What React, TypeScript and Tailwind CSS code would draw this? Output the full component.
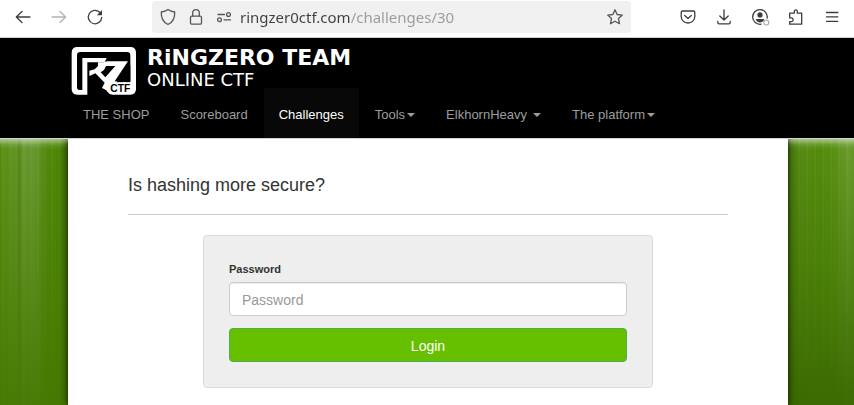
import type { ReactNode } from "react";

function ToolButton({ label, children }: { label: string; children: ReactNode }) {
  return (
    <button type="button" aria-label={label} className="flex h-8 w-9 shrink-0 items-center justify-center text-[#3c3c3e]">
      {children}
    </button>
  );
}

function Icon({ children, className = "" }: { children: ReactNode; className?: string }) {
  return (
    <svg
      viewBox="0 0 16 16"
      className={`size-4 shrink-0 overflow-visible ${className}`}
      fill="none"
      stroke="currentColor"
      strokeWidth="1.3"
      strokeLinecap="round"
      strokeLinejoin="round"
      aria-hidden="true"
    >
      {children}
    </svg>
  );
}

function BrowserBar() {
  return (
    <div className="flex h-[38px] items-start border-b border-[#cfcfcf] bg-white pt-px pr-1 pl-[5px]">
      <ToolButton label="Back">
        <Icon><path d="M15 8H1.5M7 2.5 1.3 8 7 13.5" /></Icon>
      </ToolButton>
      <ToolButton label="Forward">
        <Icon className="text-[#b3b3b4]"><path d="M1 8h13.5M9 2.500 14.700 8 9 13.500" /></Icon>
      </ToolButton>
      <ToolButton label="Reload">
        <Icon>
          <path d="M12.600 3.200A6.700 6.700 0 1 0 14.700 8.500" />
          <path d="M15 1v5.200H9.800z" fill="currentColor" stroke="none" />
        </Icon>
      </ToolButton>
      <div className="mx-[39px] flex h-8 min-w-0 flex-1 items-center gap-3 rounded bg-[#f0f0f1] px-2 text-[#56565a]">
        <Icon><path d="M8 .6C6 2.200 3.800 2.800 1.300 3c-.3 5.800 2 10.400 6.700 12.500C12.700 13.400 15 8.800 14.700 3 12.200 2.800 10 2.200 8 .6z" /></Icon>
        <Icon>
          <rect x="2.500" y="7.200" width="11" height="8" rx="1.300" />
          <path d="M4.700 7V4a3.300 3.300 0 0 1 6.600 0v3" />
        </Icon>
        <Icon>
          <path d="M2 5.500h6.500M8 10.800h6.500" />
          <circle cx="12.500" cy="5.500" r="1.900" />
          <circle cx="3.500" cy="10.800" r="1.900" />
        </Icon>
        <input
          aria-label="Address"
          type="text"
          defaultValue="ringzer0ctf.com/challenges/30"
          className="-ml-1 h-8 min-w-0 flex-1 bg-[linear-gradient(90deg,#3f3f42_110px,#9a9a9c_110px)] bg-clip-text font-['Noto_Sans',sans-serif] text-[15px] text-transparent outline-none"
        />
        <button type="button" aria-label="Bookmark">
          <Icon><path d="m8 .8 2.100 4.700 5.200.6-3.800 3.500 1 5.100L8 12.200l-4.500 2.500 1-5.100L.7 6.100l5.200-.6z" /></Icon>
        </button>
      </div>
      <ToolButton label="Pocket">
        <Icon>
          <path d="M2.500 2h11c.8 0 1.300.5 1.300 1.300V7.500a6.800 6.500 0 0 1-13.600 0V3.300C1.200 2.500 1.700 2 2.500 2z" />
          <path d="M4.700 6.500 8 9.500l3.300-3" />
        </Icon>
      </ToolButton>
      <ToolButton label="Downloads">
        <Icon><path d="M8 .8v10M3.800 7 8 11l4.200-4M1.800 12.500v1c0 .8.500 1.300 1.300 1.300h9.800c.8 0 1.300-.5 1.300-1.300v-1" /></Icon>
      </ToolButton>
      <ToolButton label="Account">
        <Icon>
          <path d="M15.200 9A7.300 7.300 0 1 0 9 15.200" />
          <circle cx="8" cy="5.900" r="2.600" fill="currentColor" stroke="none" />
          <path d="M3.800 10h8.400c-.3 2.300-2.200 3.500-4.200 3.500S4.100 12.300 3.800 10z" fill="currentColor" stroke="none" />
          <circle cx="14.300" cy="13.500" r="2.500" fill="white" stroke="#a5a5a6" strokeWidth="1.100" />
        </Icon>
      </ToolButton>
      <ToolButton label="Extensions">
        <Icon><path d="M1.700 8V4.200h4.600V2.400a1.500 1.500 0 0 1 3 0v1.800h4.400v11H1.700v-2.500h1.500a1.600 1.600 0 0 0 0-3.800H1.700z" /></Icon>
      </ToolButton>
      <ToolButton label="Menu">
        <Icon><path d="M2.500 3.500h11.300M2.500 7.900h11.300M2.500 12.300h11.300" /></Icon>
      </ToolButton>
    </div>
  );
}

function Brand() {
  return (
    <a href="#home" className="flex h-[50px] items-start gap-[11px] pl-[3px] text-white">
      <svg viewBox="9 12 195 147" className="mt-2 h-[49px] w-[65px] shrink-0" aria-hidden="true">
        <path
          fill="white"
          d="M28 15H187Q204 15 204 32V141Q204 158 187 158H134Q124 158 118 149L108 136 118 118H187V40Q187 30 177 30H37Q27 30 27 40V136Q27 144 35 144H43V48H116L110 61H58V158H28Q11 158 11 141V32Q11 15 28 15Z"
        />
        <path fill="white" d="M64 86 80 82 90 72V61H106L118 58H180L132 130 114 144 102 138 110 122 82 94 64 102Z" />
        <path fill="black" d="M114 72H142L112 106 98 91 108 84Z" />
        <path fill="black" d="M163 90 187 70V125H143Z" />
        <text x="127" y="150" fill="black" stroke="white" strokeWidth="10" paintOrder="stroke" fontFamily="Liberation Sans" fontWeight="700" fontSize="31">CTF</text>
      </svg>
      <span className="flex flex-col pt-2 font-['DejaVu_Sans',sans-serif] whitespace-nowrap">
        <span className="text-[22px] leading-6 font-bold">RiNGZERO TEAM</span>
        <span className="text-[18px] leading-5">ONLINE CTF</span>
      </span>
    </a>
  );
}

function Caret() {
  return <span className="ml-0.5 inline-block border-x-4 border-t-4 border-x-transparent border-t-current align-middle" />;
}

function NavBar() {
  const item = "flex h-[50px] items-center px-[15px] pt-[3px] whitespace-nowrap";
  return (
    <header className="border-b border-[#d2d2d2] bg-black pl-0.5">
      <div className="mx-auto max-w-[720px]">
        <Brand />
        <nav aria-label="Main" className="flex gap-px text-[13px] text-[#9d9d9d]">
          <a href="#shop" className={item}>THE SHOP</a>
          <a href="#scoreboard" className={item}>Scoreboard</a>
          <a href="#challenges" aria-current="page" className={`${item} bg-[#080808] text-white`}>Challenges</a>
          <button type="button" className={item}>Tools<Caret /></button>
          <button type="button" className={`${item} gap-1`}>ElkhornHeavy <Caret /></button>
          <button type="button" className={item}>The platform<Caret /></button>
        </nav>
      </div>
    </header>
  );
}

function LoginForm() {
  return (
    <form className="mx-auto mt-5 w-3/4 rounded border border-[#dcdcdc] bg-[#eeeeee] p-[25px]" onSubmit={(e) => e.preventDefault()}>
      <label htmlFor="password" className="mb-1 block text-[11px] leading-[17px] font-bold">Password</label>
      <input
        id="password"
        type="password"
        placeholder="Password"
        className="block h-[34px] w-full rounded border border-[#cccccc] bg-white px-3 pt-0.5 text-[14px] shadow-[inset_0_1px_1px_rgba(0,0,0,0.075)] outline-none placeholder:text-[#999999]"
      />
      <button type="submit" className="mt-3 block h-[34px] w-full rounded border border-[#4cae4c] bg-[#66c000] pt-0.5 text-[14px] text-white">
        Login
      </button>
    </form>
  );
}

export default function App() {
  return (
    <div className="flex min-h-screen flex-col font-['Liberation_Sans',Arial,sans-serif] text-[#333333]">
      <BrowserBar />
      <NavBar />
      <div className="flex flex-1 overflow-hidden">
        <div className="flex-1 basis-0.5 bg-[linear-gradient(180deg,rgba(255,255,255,0.5)_0px,rgba(255,255,255,0.1)_6px,rgba(255,255,255,0)_10px),linear-gradient(180deg,rgba(70,120,0,0),rgba(70,120,0,0.45)_50%,rgba(66,118,0,0.85)),repeating-linear-gradient(90deg,rgba(30,70,0,0.12)_0px,rgba(30,70,0,0)_2px,rgba(150,190,60,0.1)_3px,rgba(30,70,0,0.05)_5px,rgba(30,70,0,0)_7px),linear-gradient(90deg,#5b9217_0px,#669828_16px,#55861a_19px,#6b9c32_22px,#6b9b33_36px,#548a10_46px,#4f8c08_56px,#457808_68px)]" />
        <main className="relative w-[720px] max-w-full bg-white px-[60px] pt-[33px] pb-[17px] shadow-[0_0_7px_rgba(0,0,0,0.9)]">
          <h1 className="border-b border-[#cccccc] pb-4 text-[18px] leading-[26px]">Is hashing more secure?</h1>
          <LoginForm />
        </main>
        <div className="flex-1 bg-[linear-gradient(180deg,rgba(255,255,255,0.5)_0px,rgba(255,255,255,0.1)_6px,rgba(255,255,255,0)_10px),linear-gradient(180deg,rgba(60,100,0,0),rgba(62,112,0,0.5)_50%,rgba(56,102,0,0.9)),repeating-linear-gradient(90deg,rgba(30,70,0,0.12)_0px,rgba(30,70,0,0)_2px,rgba(150,190,60,0.1)_3px,rgba(30,70,0,0.05)_5px,rgba(30,70,0,0)_8px),linear-gradient(90deg,#4a7d0c_0px,#598e16_14px,#55900f_32px,#5c9415_46px,#6f9f32_60px,#689c28_66px)]" />
      </div>
    </div>
  );
}
